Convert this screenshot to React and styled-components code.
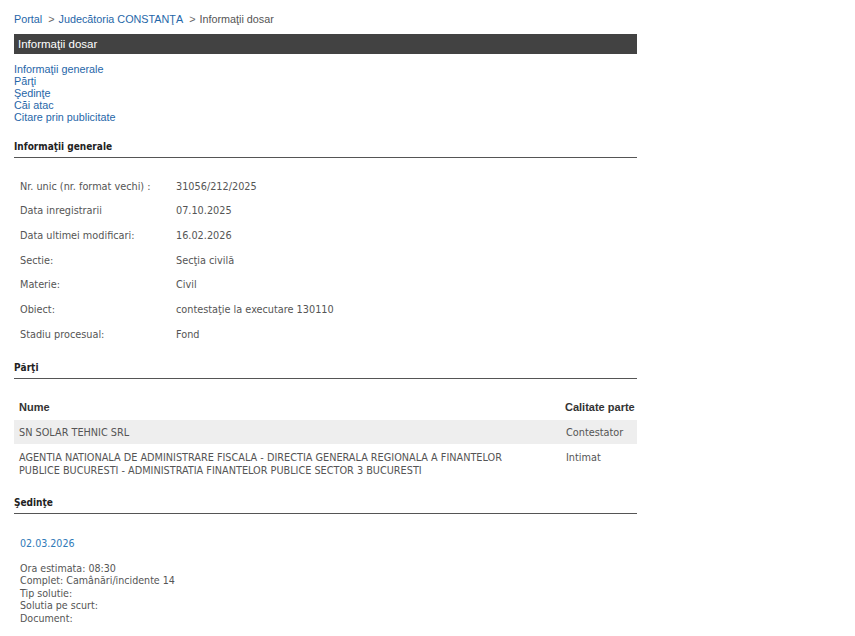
import React from "react";
import styled, { createGlobalStyle } from "styled-components";

const Global = createGlobalStyle`
  html, body { margin: 0; padding: 0; background: #fff; }
  body { font-family: "Liberation Sans", Arial, sans-serif; }
`;

const Cond = `"DejaVu Sans Condensed", "DejaVu Sans", sans-serif`;

const Page = styled.div`
  width: 623px;
  padding: 12px 0 0 14px;
`;

const Crumbs = styled.div`
  font-size: 10.8px;
  line-height: 14px;
  color: #555;
  height: 14px;
`;

const Link = styled.a`
  color: #1f66a8;
  text-decoration: none;
`;

const Sep = styled.span`
  color: #666;
  margin: 0 4px 0 6px;
`;

const TitleBar = styled.div`
  margin-top: 8px;
  height: 20px;
  background: #424242;
  color: #fff;
  font-size: 11.5px;
  line-height: 20px;
  padding-left: 4px;
`;

const NavList = styled.div`
  margin-top: 9px;
  display: flex;
  flex-direction: column;
  font-size: 10.8px;
  line-height: 12px;
`;

const SectionHead = styled.div`
  margin-top: ${(p) => p.$top}px;
  font-family: ${Cond};
  font-weight: bold;
  font-size: 10px;
  color: #222;
  line-height: 14px;
  padding-bottom: 3px;
  border-bottom: 1px solid #555;
`;

const InfoTable = styled.div`
  margin-top: 16px;
  display: grid;
  grid-template-columns: 156px 1fr;
  grid-auto-rows: 24.66px;
  padding-left: 6px;
  font-family: ${Cond};
  font-size: 10.8px;
  color: #555;
  align-items: center;
`;

const Parties = styled.div`
  margin-top: 18px;
`;

const PRow = styled.div`
  display: grid;
  grid-template-columns: 540px 1fr;
  padding: ${(p) => p.$pad};
  background: ${(p) => (p.$shade ? "#eeeeee" : "transparent")};
  font-family: ${(p) => (p.$head ? `"Liberation Sans", Arial, sans-serif` : Cond)};
  font-weight: ${(p) => (p.$head ? "bold" : "normal")};
  font-size: ${(p) => (p.$head ? "11px" : "10.8px")};
  color: ${(p) => (p.$head ? "#333" : "#555")};
  line-height: 13px;
`;

const NameCell = styled.div`
  padding: 0 12px 0 5px;
`;

const RoleCell = styled.div`
  padding-left: ${(p) => p.$pl}px;
  white-space: nowrap;
`;

const Hearing = styled.div`
  margin-top: 22px;
  padding-left: 6px;
  font-family: ${Cond};
  font-size: 10.6px;
  color: #555;
`;

const HDate = styled.div`
  color: #2f7ab8;
  font-size: 10.6px;
  line-height: 14px;
`;

const HLines = styled.div`
  margin-top: 12px;
  line-height: 12.5px;
  display: flex;
  flex-direction: column;
`;

const info = [
  ["Nr. unic (nr. format vechi) :", "31056/212/2025"],
  ["Data inregistrarii", "07.10.2025"],
  ["Data ultimei modificari:", "16.02.2026"],
  ["Sectie:", "Secţia civilă"],
  ["Materie:", "Civil"],
  ["Obiect:", "contestaţie la executare 130110"],
  ["Stadiu procesual:", "Fond"],
];

export default function App() {
  return (
    <>
      <Global />
      <Page>
        <Crumbs>
          <Link href="#">Portal</Link>
          <Sep>&gt;</Sep>
          <Link href="#">Judecătoria CONSTANŢA</Link>
          <Sep>&gt;</Sep>
          Informaţii dosar
        </Crumbs>
        <TitleBar>Informaţii dosar</TitleBar>
        <NavList>
          <Link href="#">Informaţii generale</Link>
          <Link href="#">Părţi</Link>
          <Link href="#">Şedinţe</Link>
          <Link href="#">Căi atac</Link>
          <Link href="#">Citare prin publicitate</Link>
        </NavList>
        <SectionHead $top={17}>Informaţii generale</SectionHead>
        <InfoTable>
          {info.map(([k, v]) => (
            <React.Fragment key={k}>
              <div>{k}</div>
              <div>{v}</div>
            </React.Fragment>
          ))}
        </InfoTable>
        <SectionHead $top={14}>Părţi</SectionHead>
        <Parties>
          <PRow $head $pad="4px 0 6px">
            <NameCell>Nume</NameCell>
            <RoleCell $pl={11}>Calitate parte</RoleCell>
          </PRow>
          <PRow $shade $pad="6px 0 5px">
            <NameCell>SN SOLAR TEHNIC SRL</NameCell>
            <RoleCell $pl={12}>Contestator</RoleCell>
          </PRow>
          <PRow $pad="7px 0 6px">
            <NameCell>
              AGENTIA NATIONALA DE ADMINISTRARE FISCALA - DIRECTIA GENERALA REGIONALA A FINANTELOR PUBLICE
              BUCURESTI - ADMINISTRATIA FINANTELOR PUBLICE SECTOR 3 BUCURESTI
            </NameCell>
            <RoleCell $pl={12}>Intimat</RoleCell>
          </PRow>
        </Parties>
        <SectionHead $top={13}>Şedinţe</SectionHead>
        <Hearing>
          <HDate>02.03.2026</HDate>
          <HLines>
            <div>Ora estimata: 08:30</div>
            <div>Complet: Camânări/incidente 14</div>
            <div>Tip solutie:</div>
            <div>Solutia pe scurt:</div>
            <div>Document:</div>
          </HLines>
        </Hearing>
      </Page>
    </>
  );
}
